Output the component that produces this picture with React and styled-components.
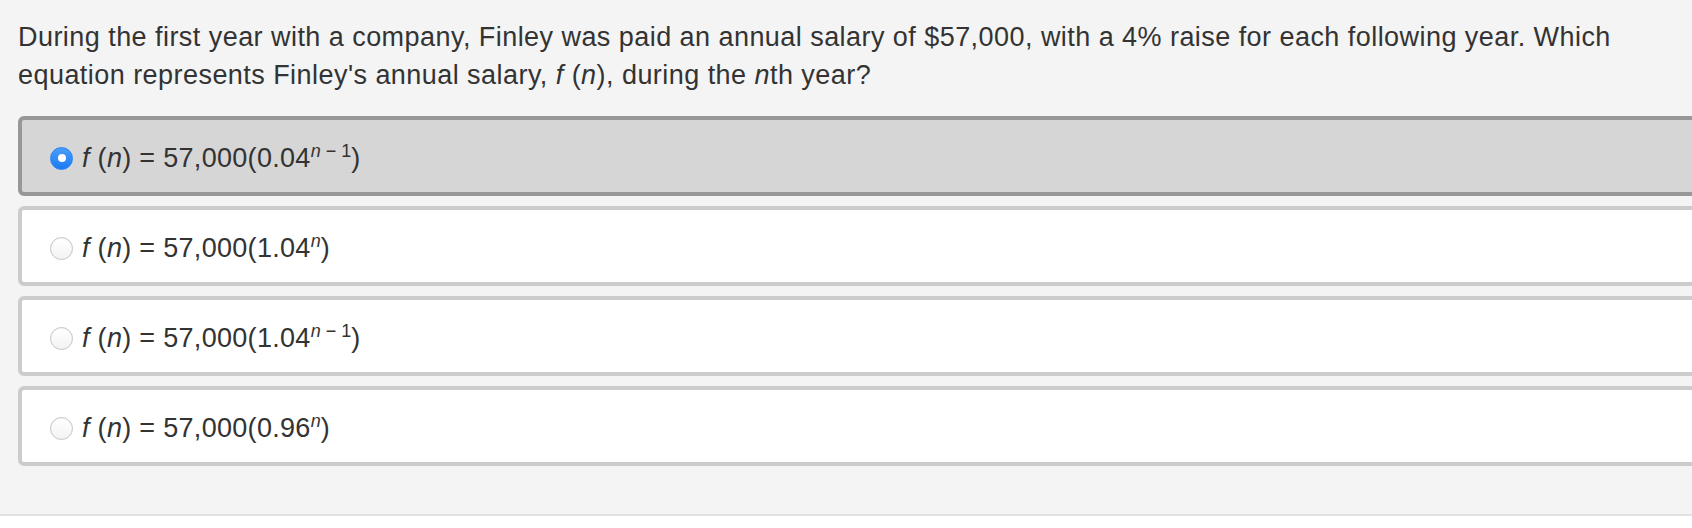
import React from 'react'
import styled, { createGlobalStyle } from 'styled-components'

const GlobalStyle = createGlobalStyle`
  html, body {
    margin: 0;
    padding: 0;
    background: #fff;
  }
  body {
    font-family: 'Liberation Sans', Arial, Helvetica, sans-serif;
    overflow: hidden;
  }
`

const Panel = styled.div`
  background-color: #f4f4f4;
  border-bottom: 2px solid #e2e2e2;
  padding: 18px 0 48px 18px;
  overflow: hidden;
`

const Question = styled.p`
  margin: 0 0 22px;
  padding-right: 40px;
  font-size: 27px;
  line-height: 38px;
  letter-spacing: 0.45px;
  color: #333;
`

const Choices = styled.div`
  display: flex;
  flex-direction: column;
  gap: 10px;
  margin-right: -60px;
`

const Choice = styled.label`
  height: 80px;
  box-sizing: border-box;
  display: flex;
  align-items: center;
  gap: 9px;
  padding: 4px 0 0 28px;
  border: 4px solid ${props => (props.selected ? '#979797' : '#cccccc')};
  border-radius: 6px;
  background-color: ${props => (props.selected ? '#d6d6d6' : '#ffffff')};
  font-size: 27px;
  letter-spacing: 0.3px;
  color: #333;
  cursor: pointer;
`

const Radio = styled.span`
  flex: none;
  width: 23px;
  height: 23px;
  box-sizing: border-box;
  border-radius: 50%;
  display: flex;
  align-items: center;
  justify-content: center;
  background: ${props =>
    props.checked
      ? 'linear-gradient(#4a9dfc, #1b7bf4)'
      : 'linear-gradient(#ffffff, #f3f3f3)'};
  border: 1px solid ${props => (props.checked ? '#2a82f2' : '#c4c4c4')};
  box-shadow: ${props =>
    props.checked ? 'none' : 'inset 0 1px 1px rgba(0, 0, 0, 0.04)'};

  &::after {
    content: '';
    display: ${props => (props.checked ? 'block' : 'none')};
    width: 8px;
    height: 8px;
    border-radius: 50%;
    background: #fff;
  }
`

const Sup = styled.sup`
  font-size: 18px;
  line-height: 0;
  vertical-align: 10px;
  letter-spacing: 0;
`

const choices = [
  { base: '0.04', exp: 'n − 1', selected: true },
  { base: '1.04', exp: 'n' },
  { base: '1.04', exp: 'n − 1' },
  { base: '0.96', exp: 'n' },
]

function Exponent({ text }) {
  const [first, ...rest] = text.split(' ')
  return (
    <Sup>
      <i>{first}</i>
      {rest.length ? ' ' + rest.join(' ') : null}
    </Sup>
  )
}

export default function App() {
  return (
    <>
      <GlobalStyle />
      <Panel>
        <Question>
          During the first year with a company, Finley was paid an annual salary
          of $57,000, with a 4% raise for each following year. Which equation
          represents Finley's annual salary, <i>f</i> (<i>n</i>), during the{' '}
          <i>n</i>th year?
        </Question>
        <Choices>
          {choices.map((c, i) => (
            <Choice key={i} selected={c.selected}>
              <Radio checked={c.selected} />
              <span>
                <i>f</i> (<i>n</i>) = 57,000({c.base}
                <Exponent text={c.exp} />)
              </span>
            </Choice>
          ))}
        </Choices>
      </Panel>
    </>
  )
}
